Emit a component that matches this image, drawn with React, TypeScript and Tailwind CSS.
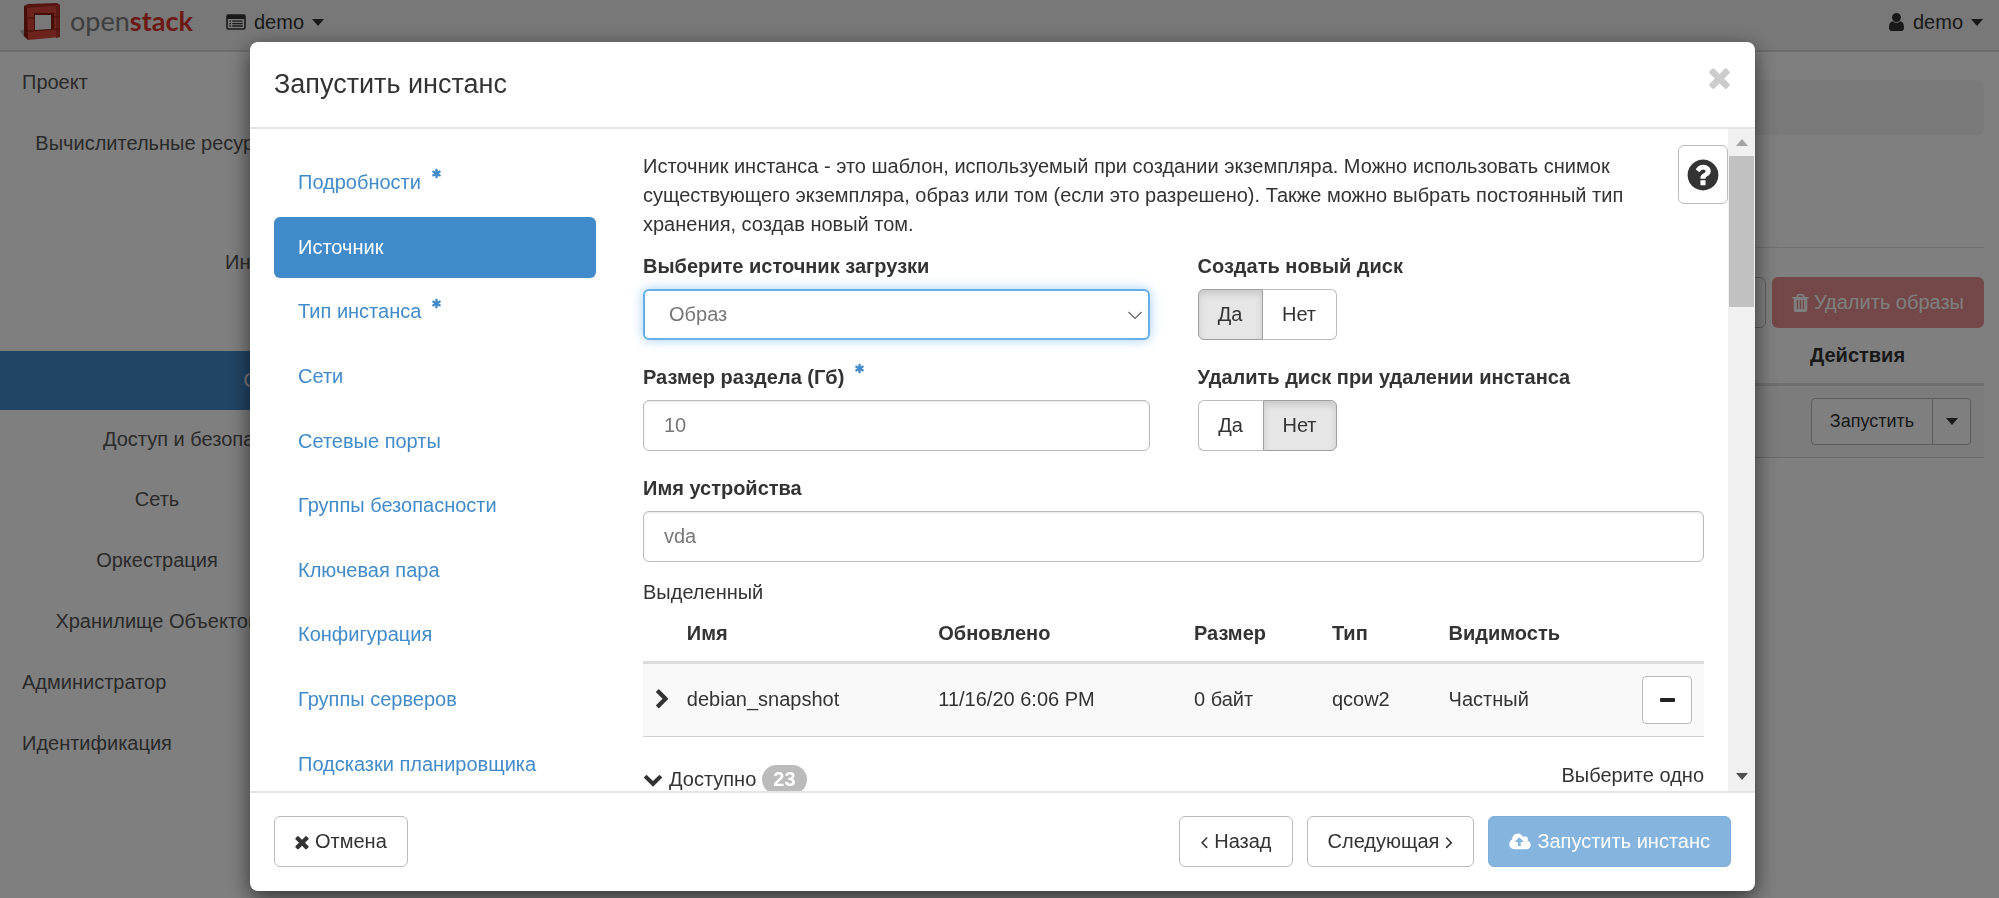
import React from "react";
import clsx from "clsx";

const ICONS = {
  times:
    "M1490 1322q0 40-28 68l-136 136q-28 28-68 28t-68-28l-294-294-294 294q-28 28-68 28t-68-28l-136-136q-28-28-28-68t28-68l294-294-294-294q-28-28-28-68t28-68l136-136q28-28 68-28t68 28l294 294 294-294q28-28 68-28t68 28l136 136q28 28 28 68t-28 68l-294 294 294 294q28 28 28 68z",
  chevronRight:
    "M1363 877l-742 742q-19 19-45 19t-45-19l-166-166q-19-19-19-45t19-45l531-531-531-531q-19-19-19-45t19-45l166-166q19-19 45-19t45 19l742 742q19 19 19 45t-19 45z",
  chevronDown:
    "M1683 808l-742 741q-19 19-45 19t-45-19l-742-741q-19-19-19-45.5t19-45.5l166-165q19-19 45-19t45 19l531 531 531-531q19-19 45-19t45 19l166 165q19 19 19 45.5t-19 45.5z",
  question:
    "M1024 1376v-192q0-14-9-23t-23-9h-192q-14 0-23 9t-9 23v192q0 14 9 23t23 9h192q14 0 23-9t9-23zm256-672q0-88-55.5-163t-138.5-116-170-41q-243 0-371 213-15 24 8 42l132 100q7 6 19 6 16 0 25-12 53-68 86-92 34-24 86-24 48 0 85.5 26t37.5 59q0 38-20 61t-68 45q-63 28-115.5 86.5t-52.5 125.5v36q0 14 9 23t23 9h192q14 0 23-9t9-23q0-19 21.5-49.5t54.5-49.5q32-18 49-28.5t46-35 44.5-48 28-60.5 12.5-81zm384 192q0 209-103 385.5t-279.5 279.5-385.5 103-385.5-103-279.5-279.5-103-385.5 103-385.5 279.5-279.5 385.5-103 385.5 103 279.5 279.5 103 385.5z",
  user: "M1536 1399q0 109-62.5 187t-150.5 78h-854q-88 0-150.5-78t-62.5-187q0-85 8.5-160.5t31.5-152 58.5-131 94-89 134.5-34.5q131 128 313 128t313-128q76 0 134.5 34.5t94 89 58.5 131 31.5 152 8.5 160.5zm-256-887q0 159-112.5 271.5t-271.5 112.5-271.5-112.5-112.5-271.5 112.5-271.5 271.5-112.5 271.5 112.5 112.5 271.5z",
  trash:
    "M704 1376v-704q0-14-9-23t-23-9h-64q-14 0-23 9t-9 23v704q0 14 9 23t23 9h64q14 0 23-9t9-23zm256 0v-704q0-14-9-23t-23-9h-64q-14 0-23 9t-9 23v704q0 14 9 23t23 9h64q14 0 23-9t9-23zm256 0v-704q0-14-9-23t-23-9h-64q-14 0-23 9t-9 23v704q0 14 9 23t23 9h64q14 0 23-9t9-23zm-544-992h448l-48-117q-7-9-17-11h-317q-10 2-17 11zm928 32v64q0 14-9 23t-23 9h-96v948q0 83-47 143.5t-113 60.5h-832q-66 0-113-58.5t-47-141.5v-952h-96q-14 0-23-9t-9-23v-64q0-14 9-23t23-9h309l70-167q15-37 54-63t79-26h320q40 0 79 26t54 63l70 167h309q14 0 23 9t9 23z",
  cloudUpload:
    "M1216 864q0-14-9-23l-352-352q-9-9-23-9t-23 9l-351 351q-10 12-10 24 0 14 9 23t23 9h224v352q0 13 9.5 22.5t22.5 9.5h192q13 0 22.5-9.5t9.5-22.5v-352h224q13 0 22.5-9.5t9.5-22.5zm640 288q0 159-112.5 271.5t-271.5 112.5h-1088q-185 0-316.5-131.5t-131.5-316.5q0-130 70-240t188-165q-2-30-2-43 0-212 150-362t362-150q156 0 285.5 87t188.5 231q71-62 166-62 106 0 181 75t75 181q0 76-41 138 130 31 213.5 135.5t83.5 238.5z",
  asterisk:
    "M1546 1050q46 26 59.5 77.5t-12.5 97.5l-64 110q-26 46-77.5 59.5t-97.5-12.5l-266-153v307q0 52-38 90t-90 38h-128q-52 0-90-38t-38-90v-307l-266 153q-46 26-97.5 12.5t-77.5-59.5l-64-110q-26-46-12.5-97.5t59.5-77.5l266-154-266-154q-46-26-59.5-77.5t12.5-97.5l64-110q26-46 77.5-59.5t97.5 12.5l266 153v-307q0-52 38-90t90-38h128q52 0 90 38t38 90v307l266-153q46-26 97.5-12.5t77.5 59.5l64 110q26 46 12.5 97.5t-59.5 77.5l-266 154z",
  angleLeft:
    "M1203 544q0 13-10 23l-393 393 393 393q10 10 10 23t-10 23l-50 50q-10 10-23 10t-23-10l-466-466q-10-10-10-23t10-23l466-466q10-10 23-10t23 10l50 50q10 10 10 23z",
  angleRight:
    "M1171 960q0 13-10 23l-466 466q-10 10-23 10t-23-10l-50-50q-10-10-10-23t10-23l393-393-393-393q-10-10-10-23t10-23l50-50q10-10 23-10t23 10l466 466q10 10 10 23z",
};

interface IconProps {
  name: keyof typeof ICONS;
  viewBox?: string;
  className?: string;
}

const Icon: React.FC<IconProps> = ({
  name,
  viewBox = "0 0 1792 1792",
  className,
}) => (
  <svg
    viewBox={viewBox}
    className={clsx("shrink-0 fill-current", className)}
    aria-hidden="true"
  >
    <path d={ICONS[name]} />
  </svg>
);

const Caret = ({ className }: { className?: string }) => (
  <svg
    viewBox="0 0 12 7"
    className={clsx("h-[7px] w-3 shrink-0 fill-current", className)}
    aria-hidden="true"
  >
    <path d="M0 0h12L6 7z" />
  </svg>
);

const Required = () => (
  <sup className="ml-1 text-[#428bca]">
    <Icon name="asterisk" className="-mt-1 mb-1 inline h-[11px] w-[11px]" />
  </sup>
);

const Logo = () => (
  <a href="#" className="flex items-start gap-2" aria-label="openstack">
    <svg viewBox="0 0 42 41" className="h-[41px] w-[42px]" aria-hidden="true">
      <path d="M0 31l5-2v9z" fill="#b5b5b5" />
      <path d="M4 6l4-1v35l-4-4z" fill="#8c1c12" />
      <path d="M4 6l4-2 29-1 3 2-4 2-29 2z" fill="#a92a20" />
      <path d="M7 8l33-3v32L8 40z" fill="#d8453a" />
      <path d="M36 6l4-1v32l-4 1z" fill="#b8352a" />
      <path d="M14 13h20v17l-20 1z" fill="#8c1c12" />
      <path d="M15 15h16v14l-16 1z" fill="#f0f0f0" />
      <path d="M7 18h7M7 31h7M34 17h6M33 29h7" stroke="#8c1c12" />
    </svg>
    <span className="font-[Lato,sans-serif] text-[27px] leading-[42px] text-[#7d7d7d]">
      open<span className="font-bold text-[#d8352b]">stack</span>
    </span>
  </a>
);

const NAV = [
  { label: "Проект", kind: "top" },
  { label: "Вычислительные ресурсы", kind: "group" },
  { label: "Обзор", kind: "panel" },
  { label: "Инстансы", kind: "panel" },
  { label: "Диски", kind: "panel" },
  { label: "Образы", kind: "panel", active: true },
  { label: "Доступ и безопасность", kind: "panel" },
  { label: "Сеть", kind: "group" },
  { label: "Оркестрация", kind: "group" },
  { label: "Хранилище Объектов", kind: "group" },
  { label: "Администратор", kind: "top" },
  { label: "Идентификация", kind: "top" },
];

const STEPS = [
  { label: "Подробности", required: true },
  { label: "Источник", active: true },
  { label: "Тип инстанса", required: true },
  { label: "Сети" },
  { label: "Сетевые порты" },
  { label: "Группы безопасности" },
  { label: "Ключевая пара" },
  { label: "Конфигурация" },
  { label: "Группы серверов" },
  { label: "Подсказки планировщика" },
];

const TopBar = () => (
  <header className="flex h-[52px] items-start justify-between border-b-2 border-[#d8d8d8] bg-[#f0f0f0] pr-4 pl-5">
    <div className="flex items-start">
      <div className="w-[206px]">
        <Logo />
      </div>
      <button className="flex h-[44px] items-center gap-2">
        <svg viewBox="0 0 20 16" className="h-4 w-5" aria-hidden="true">
          <rect x="1" y="1" width="18" height="14" rx="1.500" fill="none" stroke="#333" strokeWidth="1.600" />
          <path d="M1 1h18v4H1z" fill="#333" />
          <path
            d="M3.500 7.200h1.500M3.500 9.600h1.500M3.500 12h1.500M6.200 7.200h10.500M6.200 9.600h10.500M6.200 12h10.500"
            stroke="#333"
            strokeWidth="1.300"
          />
        </svg>
        demo
        <Caret />
      </button>
    </div>
    <button className="flex h-[44px] items-center gap-2">
      <Icon
        name="user"
        viewBox="256 128 1280 1536"
        className="h-[18px] w-[17px]"
      />
      demo
      <Caret />
    </button>
  </header>
);

const SideNav = () => (
  <nav className="w-[334px] shrink-0 text-[#555]">
    {NAV.map((item) => (
      <a
        key={item.label}
        href="#"
        className={clsx(
          "flex items-center whitespace-nowrap",
          item.kind === "top" && "h-[61px] pl-[22px]",
          item.kind === "group" && "h-[61px] justify-center pr-5",
          item.kind === "panel" && "h-[59px] justify-end pr-[18px]",
          item.active && "bg-[#428bca] text-white"
        )}
      >
        {item.label}
      </a>
    ))}
  </nav>
);

const ImagesPage = () => (
  <main className="min-w-0 flex-1 pt-7 pr-[15px] pl-6">
    <div className="h-[55px] rounded-md bg-[#f5f5f5]"></div>
    <hr className="mt-28 border-[#e0e0e0]" />
    <div className="mt-[29px] flex justify-end gap-[6px]">
      <button
        className="h-[51px] w-16 rounded-md border border-[#bbb]"
        aria-label="Создать образ"
      ></button>
      <button className="flex h-[51px] items-center gap-[5px] rounded-md bg-[#e89090] px-5 text-white">
        <Icon
          name="trash"
          viewBox="192 128 1408 1536"
          className="h-[18px] w-[17px]"
        />
        Удалить образы
      </button>
    </div>
    <table className="w-full">
      <thead>
        <tr className="h-[56px] border-b-[3px] border-[#ddd]">
          <th></th>
          <th className="w-[185px] pl-[11px] text-left">Действия</th>
        </tr>
      </thead>
      <tbody>
        <tr className="h-[73px] border-b border-[#d5d5d5] bg-[#f9f9f9]">
          <td></td>
          <td className="pl-3">
            <div className="flex h-[47px] w-40 text-lg">
              <button className="flex-1 rounded-l border border-[#bbb] bg-white">
                Запустить
              </button>
              <button
                className="flex w-[38px] items-center justify-center rounded-r border border-l-0 border-[#bbb] bg-white"
                aria-label="Другие действия"
              >
                <Caret />
              </button>
            </div>
          </td>
        </tr>
      </tbody>
    </table>
  </main>
);

interface ToggleProps {
  name: string;
  title: string;
  value: "yes" | "no";
}

const Toggle: React.FC<ToggleProps> = ({ name, title, value }) => (
  <fieldset>
    <legend className="mb-2 font-bold">{title}</legend>
    <div className="flex h-[51px]">
      <label className="flex w-[65px] cursor-pointer items-center justify-center rounded-l-md border border-r-0 border-[#bbb] has-checked:border-r has-checked:border-[#a0a0a0] has-checked:bg-[#e6e6e6] has-checked:shadow-[inset_0_4px_7px_rgba(0,0,0,0.125)]">
        <input
          type="radio"
          name={name}
          defaultChecked={value === "yes"}
          className="sr-only"
        />
        Да
      </label>
      <label
        className={clsx(
          "flex w-[74px] cursor-pointer items-center justify-center rounded-r-md border border-[#bbb] has-checked:border-[#a0a0a0] has-checked:bg-[#e6e6e6] has-checked:shadow-[inset_0_4px_7px_rgba(0,0,0,0.125)]",
          value === "yes" && "border-l-0"
        )}
      >
        <input
          type="radio"
          name={name}
          defaultChecked={value === "no"}
          className="sr-only"
        />
        Нет
      </label>
    </div>
  </fieldset>
);

const INPUT =
  "h-[51px] w-full rounded-md border border-[#bbb] bg-white px-5 text-[#777] shadow-[inset_0_1px_2px_rgba(0,0,0,0.1)] outline-none";

const SourceForm = () => (
  <div className="grid grid-cols-2 gap-x-12 gap-y-[23px] pt-[13px]">
    <div>
      <label htmlFor="source" className="mb-2 block font-bold">
        Выберите источник загрузки
      </label>
      <div className="relative">
        <select
          id="source"
          className="h-[51px] w-full appearance-none rounded-md border-2 border-[#66afe9] bg-white px-6 text-[#777] shadow-[0_0_12px_rgba(102,175,233,0.6)] outline-none"
        >
          <option>Образ</option>
        </select>
        <svg
          viewBox="0 0 14 9"
          className="pointer-events-none absolute top-[22px] right-2 h-[9px] w-[14px]"
          aria-hidden="true"
        >
          <path d="M.5 1l6.500 6.500L13.500 1" fill="none" stroke="#666" strokeWidth="1.200" />
        </svg>
      </div>
    </div>
    <Toggle name="create-volume" title="Создать новый диск" value="yes" />
    <div>
      <label htmlFor="size" className="mb-2 block font-bold">
        Размер раздела (Гб) <Required />
      </label>
      <input id="size" className={INPUT} defaultValue="10" />
    </div>
    <Toggle
      name="delete-volume"
      title="Удалить диск при удалении инстанса"
      value="no"
    />
    <div className="col-span-2">
      <label htmlFor="device" className="mb-2 block font-bold">
        Имя устройства
      </label>
      <input id="device" className={INPUT} defaultValue="vda" />
    </div>
  </div>
);

const AllocatedTable = () => (
  <table className="w-full table-fixed text-left">
    <colgroup>
      <col className="w-[3%]" />
      <col className="w-[23.700%]" />
      <col className="w-[24.100%]" />
      <col className="w-[13%]" />
      <col className="w-[11%]" />
      <col className="w-[15%]" />
      <col />
    </colgroup>
    <thead>
      <tr className="h-[55px] border-b-[3px] border-[#ddd]">
        <th></th>
        <th className="pl-3">Имя</th>
        <th className="pl-3">Обновлено</th>
        <th className="pl-3">Размер</th>
        <th className="pl-3">Тип</th>
        <th className="pl-3">Видимость</th>
        <th></th>
      </tr>
    </thead>
    <tbody>
      <tr className="h-[74px] border-b border-[#d0d0d0] bg-[#f9f9f9]">
        <td className="pl-[9px]">
          <Icon name="chevronRight" className="h-[21px] w-[21px]" />
        </td>
        <td className="pl-3">debian_snapshot</td>
        <td className="pl-3">11/16/20 6:06 PM</td>
        <td className="pl-3">0 байт</td>
        <td className="pl-3">qcow2</td>
        <td className="pl-3">Частный</td>
        <td className="pr-3">
          <button
            className="ml-auto flex h-12 w-[50px] items-center justify-center rounded border border-[#bbb] bg-white"
            aria-label="Убрать"
          >
            <span className="h-1 w-[15px] rounded-[1px] bg-[#222]"></span>
          </button>
        </td>
      </tr>
    </tbody>
  </table>
);

const Steps = () => (
  <ul className="ml-6 grid h-[643px] w-[322px] shrink-0 auto-rows-fr gap-[3px]">
    {STEPS.map((step) => (
      <li key={step.label} className="flex">
        <a
          href="#"
          className={clsx(
            "flex flex-1 items-center rounded-md px-6",
            step.active ? "bg-[#428bca] text-white" : "text-[#428bca]"
          )}
        >
          <span>
            {step.label} {step.required && <Required />}
          </span>
        </a>
      </li>
    ))}
  </ul>
);

const ScrollBar = () => (
  <div className="flex w-[27px] shrink-0 flex-col items-center bg-[#f0f0f0]">
    <svg viewBox="0 0 12 7" className="my-[10px] h-[7px] w-3" aria-hidden="true">
      <path d="M0 7h12L6 0z" fill="#a3a3a3" />
    </svg>
    <div className="h-[151px] w-[25px] bg-[#c1c1c1]"></div>
    <Caret className="mt-auto mb-[11px] text-[#505050]" />
  </div>
);

const BUTTON =
  "flex h-[51px] items-center gap-[6px] rounded-md border border-[#bbb] bg-white px-5";

const LaunchDialog = () => (
  <div
    role="dialog"
    aria-labelledby="dialog-title"
    className="rounded-lg bg-white shadow-[0_7px_22px_rgba(0,0,0,0.6)]"
  >
    <div className="flex h-[87px] items-start justify-between border-b-2 border-[#e5e5e5] px-6 pt-[26px]">
      <h4 id="dialog-title" className="text-[27px] leading-8">
        Запустить инстанс
      </h4>
      <button aria-label="Закрыть" className="text-[#ccc]">
        <Icon name="times" className="-mt-[6px] -mr-1 h-[31px] w-[31px]" />
      </button>
    </div>

    <div className="flex h-[calc(100vh-236px)] overflow-hidden">
      <div className="flex min-w-0 flex-1 items-start pt-[23px]">
        <Steps />
        <section className="min-w-0 flex-1 pr-6 pl-[47px]">
          <p className="pr-10">
            Источник инстанса - это шаблон, используемый при создании экземпляра.
            Можно использовать снимок существующего экземпляра, образ или том
            (если это разрешено). Также можно выбрать постоянный тип хранения,
            создав новый том.
          </p>
          <SourceForm />
          <h5 className="mt-4">Выделенный</h5>
          <AllocatedTable />
          <div className="mt-6 flex items-start justify-between">
            <button className="mt-1 flex items-center gap-[6px]">
              <Icon name="chevronDown" className="h-5 w-5" />
              Доступно
              <span className="rounded-full bg-[#bbb] px-[11px] font-bold text-white">
                23
              </span>
            </button>
            <span>Выберите одно</span>
          </div>
        </section>
      </div>
      {/* Help toggle sits over the form's top right corner */}
      <div className="relative">
        <button
          className="absolute top-4 right-0 flex h-[59px] w-[50px] items-center justify-center rounded-md border border-[#bbb] bg-white"
          aria-label="Помощь"
        >
          <Icon name="question" className="h-9 w-9" />
        </button>
      </div>
      <ScrollBar />
    </div>

    <div className="flex items-start justify-between border-t-2 border-[#e5e5e5] px-6 pt-[23px] pb-6">
      <button className={BUTTON}>
        <Icon name="times" viewBox="302 0 1188 1792" className="h-5 w-[14px]" />
        Отмена
      </button>
      <div className="flex gap-[14px]">
        <button className={BUTTON}>
          <Icon name="angleLeft" viewBox="544 0 672 1792" className="h-5 w-2" />
          Назад
        </button>
        <button className={BUTTON}>
          Следующая
          <Icon name="angleRight" viewBox="544 0 672 1792" className="h-5 w-2" />
        </button>
        <button className="flex h-[51px] items-center gap-[6px] rounded-md border border-[#7eaedb] bg-[#85b4de] px-5 text-white">
          <Icon name="cloudUpload" viewBox="-64 0 1920 1792" className="h-5 w-[22px]" />
          Запустить инстанс
        </button>
      </div>
    </div>
  </div>
);

const App: React.FC = () => {
  return (
    <div className="min-h-screen bg-white font-['Liberation_Sans',Arial,sans-serif] text-[20px] leading-[29px] text-[#333]">
      <TopBar />
      <div className="flex">
        <SideNav />
        <ImagesPage />
      </div>
      <div className="fixed inset-0 overflow-hidden bg-black/50 pt-[42px] pr-[244px] pl-[250px]">
        <LaunchDialog />
      </div>
    </div>
  );
};

export default App;
